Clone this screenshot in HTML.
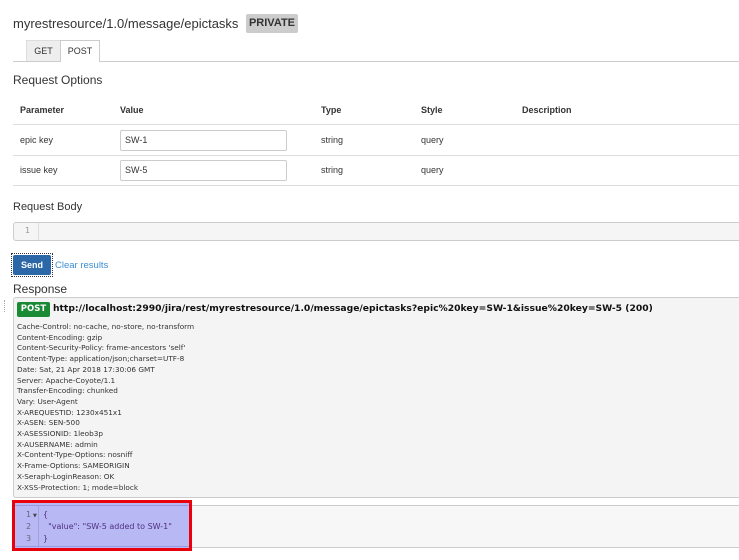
<!DOCTYPE html>
<html><head><style>
*{box-sizing:border-box;margin:0;padding:0}
body{width:739px;height:560px;overflow:hidden;background:#fff;font-family:"Liberation Sans",Arial,sans-serif;color:#333;position:relative}
.a{position:absolute;white-space:nowrap}
.hd{font-family:"DejaVu Sans",sans-serif;font-size:7.3px;color:#333;line-height:10.7px}
</style></head><body>
<div class="a" style="left:13px;top:14px;font-size:13px;line-height:19px">myrestresource/1.0/message/epictasks</div>
<div class="a" style="left:246px;top:14px;width:52px;height:19px;background:#ccc;border-radius:2px;font-size:11px;font-weight:bold;line-height:19px;text-align:center">PRIVATE</div>
<div class="a" style="left:13px;top:61px;width:726px;height:1px;background:#ccc"></div>
<div class="a" style="left:26px;top:40px;width:35px;height:21px;background:#eee;border:1px solid #ddd;border-bottom:none;font-size:9px;line-height:21px;text-align:center">GET</div>
<div class="a" style="left:60px;top:40px;width:40px;height:22px;background:#fff;border:1px solid #ccc;border-bottom:none;font-size:9px;line-height:21px;text-align:center">POST</div>
<div class="a" style="left:13px;top:73px;font-size:12px">Request Options</div>
<div class="a" style="left:20px;top:105px;font-size:9px;font-weight:bold">Parameter</div>
<div class="a" style="left:120px;top:105px;font-size:9px;font-weight:bold">Value</div>
<div class="a" style="left:321px;top:105px;font-size:9px;font-weight:bold">Type</div>
<div class="a" style="left:421px;top:105px;font-size:9px;font-weight:bold">Style</div>
<div class="a" style="left:522px;top:105px;font-size:9px;font-weight:bold">Description</div>
<div class="a" style="left:13px;top:124px;width:726px;height:1px;background:#ddd"></div>
<div class="a" style="left:13px;top:155px;width:726px;height:1px;background:#ddd"></div>
<div class="a" style="left:13px;top:185px;width:726px;height:1px;background:#ddd"></div>
<div class="a" style="left:20px;top:135px;font-size:9px">epic key</div>
<div class="a" style="left:20px;top:165px;font-size:9px">issue key</div>
<div class="a" style="left:120px;top:130px;width:167px;height:21px;border:1px solid #ccc;border-radius:2px;font-size:9px;line-height:19px;padding-left:4px">SW-1</div>
<div class="a" style="left:120px;top:160px;width:167px;height:21px;border:1px solid #ccc;border-radius:2px;font-size:9px;line-height:19px;padding-left:4px">SW-5</div>
<div class="a" style="left:321px;top:135px;font-size:9px">string</div>
<div class="a" style="left:321px;top:165px;font-size:9px">string</div>
<div class="a" style="left:421px;top:135px;font-size:9px">query</div>
<div class="a" style="left:421px;top:165px;font-size:9px">query</div>
<div class="a" style="left:13px;top:201px;font-size:11px">Request Body</div>
<div class="a" style="left:13px;top:222px;width:740px;height:19px;background:#f5f5f5;border:1px solid #ccc;border-radius:3px"></div>
<div class="a" style="left:38px;top:223px;width:1px;height:17px;background:#ddd"></div>
<div class="a hd" style="left:25px;top:226px;color:#999;font-size:8px">1</div>
<div class="a" style="left:11px;top:253px;width:42px;height:24px;border:1px dotted #333"></div>
<div class="a" style="left:13px;top:255px;width:38px;height:20px;background:#2c67a8;border-radius:2px;color:#fff;font-size:9px;font-weight:bold;line-height:20px;text-align:center">Send</div>
<div class="a" style="left:55px;top:260px;font-size:9.5px;color:#3b8dd4">Clear results</div>
<div class="a" style="left:13px;top:282px;font-size:12px">Response</div>
<div class="a" style="left:4px;top:300px;width:1px;height:12px;border-left:1px dotted #aaa"></div>
<div class="a" style="left:13px;top:297px;width:740px;height:201px;background:#f4f4f4;border:1px solid #ccc;border-radius:3px"></div>
<div class="a" style="left:17px;top:302px;width:33px;height:15px;background:#1a8a34;border-radius:2px;color:#fff;font-family:'DejaVu Sans',sans-serif;font-size:8.5px;font-weight:bold;line-height:15px;text-align:center">POST</div>
<div class="a" style="left:53px;top:302px;font-family:'DejaVu Sans',sans-serif;font-size:9.2px;font-weight:bold;color:#111;line-height:14px">http://localhost:2990/jira/rest/myrestresource/1.0/message/epictasks?epic%20key=SW-1&amp;issue%20key=SW-5 (200)</div>
<div class="a hd" style="left:17px;top:322px">Cache-Control: no-cache, no-store, no-transform<br>Content-Encoding: gzip<br>Content-Security-Policy: frame-ancestors 'self'<br>Content-Type: application/json;charset=UTF-8<br>Date: Sat, 21 Apr 2018 17:30:06 GMT<br>Server: Apache-Coyote/1.1<br>Transfer-Encoding: chunked<br>Vary: User-Agent<br>X-AREQUESTID: 1230x451x1<br>X-ASEN: SEN-500<br>X-ASESSIONID: 1leob3p<br>X-AUSERNAME: admin<br>X-Content-Type-Options: nosniff<br>X-Frame-Options: SAMEORIGIN<br>X-Seraph-LoginReason: OK<br>X-XSS-Protection: 1; mode=block</div>
<div class="a" style="left:13px;top:505px;width:740px;height:43px;background:#f7f7f7;border-top:1px solid #ccc;border-bottom:1px solid #ccc"></div>
<div class="a" style="left:12px;top:500px;width:180px;height:51px;border:3px solid #e8000b;background:#b8b8f4"></div>
<div class="a" style="left:15px;top:505px;width:174px;height:1px;background:#9a9ae0"></div>
<div class="a" style="left:15px;top:546px;width:174px;height:1px;background:#9a9ae0"></div>
<div class="a" style="left:38px;top:506px;width:1px;height:40px;background:#a0a0e0"></div>
<div class="a hd" style="left:26px;top:509px;color:#667;line-height:12px;font-size:8px">1<br>2<br>3</div>
<div class="a hd" style="left:33px;top:511px;font-size:5px;color:#444">▼</div>
<div class="a hd" style="left:43px;top:509px;color:#503080;line-height:12px;font-size:8px">{<br>&nbsp;&nbsp;"value": "SW-5 added to SW-1"<br>}</div>
</body></html>
